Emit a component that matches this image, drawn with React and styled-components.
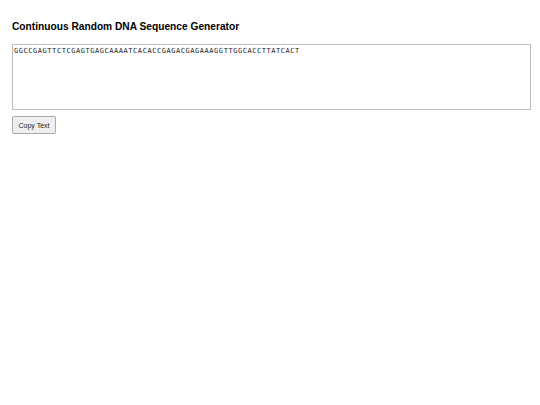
import React from "react";
import styled, { createGlobalStyle } from "styled-components";

const Global = createGlobalStyle`
  html, body { margin: 0; padding: 0; background: #fff; }
  body { font-family: "Liberation Sans", Arial, sans-serif; }
`;

const Page = styled.div`
  padding: 12px;
  display: flex;
  flex-direction: column;
`;

const Title = styled.h1`
  margin: 8px 0 0;
  font-size: 10.2px;
  font-weight: bold;
  color: #000;
  line-height: 13px;
`;

const Area = styled.textarea`
  box-sizing: border-box;
  margin-top: 11px;
  width: 519px;
  height: 66px;
  border: 1px solid #bdbdbd;
  padding: 1px 1px;
  font-family: "DejaVu Sans Mono", monospace;
  font-size: 7px;
  letter-spacing: 0.55px;
  line-height: 10px;
  color: #222;
  resize: none;
  outline: none;
`;

const Button = styled.button`
  box-sizing: border-box;
  align-self: flex-start;
  margin-top: 6px;
  width: 44px;
  height: 18px;
  padding: 0;
  background: #efefef;
  border: 1px solid #a8a8a8;
  border-radius: 2px;
  font-family: "Liberation Sans", Arial, sans-serif;
  font-weight: normal;
  font-size: 7px;
  color: #222;
`;

export default function App() {
  return (
    <>
      <Global />
      <Page>
        <Title>Continuous Random DNA Sequence Generator</Title>
        <Area readOnly value="GGCCGAGTTCTCGAGTGAGCAAAATCACACCGAGACGAGAAAGGTTGGCACCTTATCACT" />
        <Button>Copy Text</Button>
      </Page>
    </>
  );
}
